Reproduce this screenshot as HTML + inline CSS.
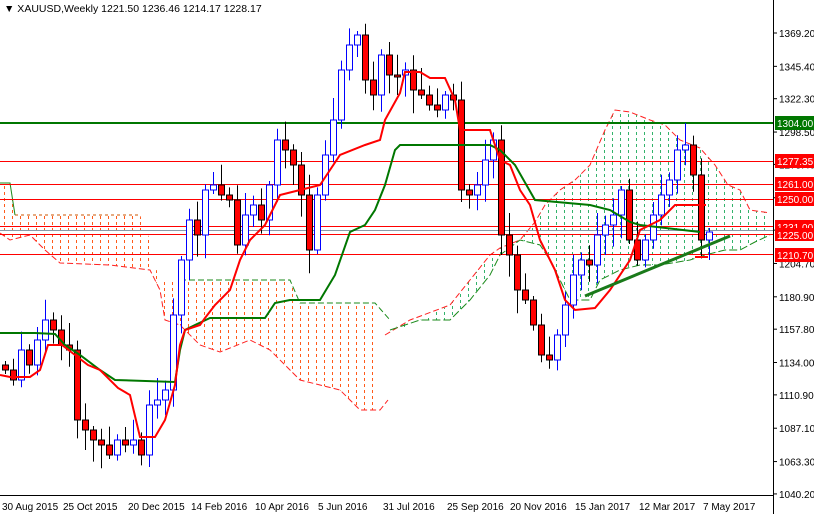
<!DOCTYPE html>
<html><head><meta charset="utf-8"><style>
html,body{margin:0;padding:0;background:#fff;}
svg{display:block;font-family:"Liberation Sans",sans-serif;}
</style></head><body>
<svg id="c" width="814" height="514" viewBox="0 0 814 514" xmlns="http://www.w3.org/2000/svg">
<defs>
<pattern id="po" width="8" height="6" patternUnits="userSpaceOnUse"><line x1="4.5" y1="0" x2="4.5" y2="3" stroke="#ff5a1a" stroke-width="1"/></pattern>
<pattern id="pg" width="8" height="6" patternUnits="userSpaceOnUse"><line x1="4.5" y1="0" x2="4.5" y2="3" stroke="#33b36b" stroke-width="1"/></pattern>
</defs>
<rect width="814" height="514" fill="#fff"/>
<polygon fill="url(#po)" points="0,183 10,183 15,215 140,215 150,240 155,265 160,280 175,280 180,280 290,280 300,303 380,303 380,410 360,410 350,400 340,390 300,380 290,370 270,350 250,340 220,352 200,345 180,325 165,320 160,290 150,270 110,265 60,263 45,250 30,235 10,240 0,233"/>
<polyline fill="none" stroke="#cc5500" stroke-width="1" stroke-dasharray="3,3" points="15,215 140,215"/>
<polyline fill="none" stroke="#1a8a1a" stroke-width="1" points="0,183 10,183 15,215"/>
<polyline fill="none" stroke="#1a8a1a" stroke-width="1" stroke-dasharray="6,3" points="180,280 290,280 300,303 375,303 390,320"/>
<polyline fill="none" stroke="#ff2020" stroke-width="1" stroke-dasharray="6,3" points="0,233 10,240 30,235 45,250 60,263 110,265 150,270 160,290 165,320 180,325 200,345 220,352 250,340 270,350 290,370 300,380 340,390 350,400 360,410 380,410 388,400"/>
<polygon fill="url(#pg)" points="390,330 400,325 420,320 450,305 470,280 490,255 500,248 520,240 535,222 545,205 560,190 575,180 590,165 605,130 615,110 630,112 650,120 665,125 680,140 700,148 715,165 728,185 740,190 750,210 770,213 770,240 755,242 740,250 725,250 705,255 690,260 660,265 640,265 620,270 600,280 590,300 570,300 550,260 540,245 520,240 500,255 490,275 470,300 450,320 420,320 400,330"/>
<polyline fill="none" stroke="#ff2020" stroke-width="1" stroke-dasharray="6,3" points="385,335 410,320 450,305 470,280 490,255 500,248 520,240 535,222 545,205 560,190 575,180 590,165 605,130 615,110 630,112 650,120 665,125 680,140 700,148 715,165 728,185 740,190 750,210 770,213"/>
<polyline fill="none" stroke="#1a8a1a" stroke-width="1" stroke-dasharray="8,3" points="390,330 420,320 450,320 470,300 490,275 500,255 520,240 540,245 550,260 570,300 590,300 600,280 620,270 640,265 660,265 690,260 705,255 725,250 740,250 755,242 770,235"/>
<line x1="0" y1="123" x2="773" y2="123" stroke="#007700" stroke-width="2"/>
<g stroke="#ff0000" stroke-width="1">
<line x1="0" y1="161.5" x2="773" y2="161.5"/><line x1="0" y1="184.5" x2="773" y2="184.5"/><line x1="0" y1="199.5" x2="773" y2="199.5"/><line x1="0" y1="226.5" x2="773" y2="226.5"/><line x1="0" y1="234.5" x2="773" y2="234.5"/><line x1="0" y1="254.5" x2="773" y2="254.5"/>
</g>
<line x1="0" y1="230.5" x2="773" y2="230.5" stroke="#8a9aa8" stroke-width="1"/>
<g id="cand"></g>
<polyline fill="none" stroke="#007700" stroke-width="2" points="0,333 35,333 55,334 65,345 80,355 100,370 115,380 175,382 180,350 185,330 195,325 210,318 265,318 275,303 290,300 320,300 335,275 350,232 365,225 375,210 385,185 395,150 400,145 490,145 500,150 515,165 535,200 590,205 610,210 630,222 640,225 700,232"/>
<polyline fill="none" stroke="#ff0000" stroke-width="2" points="0,375 10,377 30,377 40,370 48,345 62,345 75,355 88,365 100,370 118,388 130,395 140,437 155,437 165,420 175,385 180,345 185,330 200,325 205,318 215,305 230,290 240,260 250,240 265,225 280,195 300,190 320,185 330,170 340,155 365,145 380,140 385,120 400,93 405,72 420,72 430,78 445,78 455,100 460,130 490,130 500,160 510,165 520,190 530,205 540,240 555,270 565,300 575,310 595,308 610,290 630,260 640,230 660,220 675,205 690,205 700,205 706,205"/>
<line x1="695" y1="257" x2="708" y2="257" stroke="#ff0000" stroke-width="2"/>
<line x1="585" y1="296" x2="730" y2="236" stroke="#1a7a1a" stroke-width="3"/>
<line x1="773.5" y1="0" x2="773.5" y2="514" stroke="#000"/>
<line x1="0" y1="495.5" x2="773" y2="495.5" stroke="#000"/>
<g font-size="10" fill="#000" id="ylab"></g>
<g font-size="10" fill="#000">
<text x="2" y="510">30 Aug 2015</text><text x="63" y="510">25 Oct 2015</text><text x="128" y="510">20 Dec 2015</text><text x="191" y="510">14 Feb 2016</text><text x="255" y="510">10 Apr 2016</text><text x="318" y="510">5 Jun 2016</text><text x="383" y="510">31 Jul 2016</text><text x="447" y="510">25 Sep 2016</text><text x="510" y="510">20 Nov 2016</text><text x="575" y="510">15 Jan 2017</text><text x="639" y="510">12 Mar 2017</text><text x="703" y="510">7 May 2017</text>
</g>
<g font-size="10">
<rect x="775" y="116" width="39" height="14" fill="#007700"/><text x="777" y="127" fill="#fff">1304.00</text>
<rect x="775" y="154" width="39" height="14" fill="#ff0000"/><text x="777" y="165" fill="#fff">1277.35</text>
<rect x="775" y="177" width="39" height="14" fill="#ff0000"/><text x="777" y="188" fill="#fff">1261.00</text>
<rect x="775" y="192" width="39" height="14" fill="#ff0000"/><text x="777" y="203" fill="#fff">1250.00</text>
<rect x="775" y="220" width="39" height="14" fill="#ff0000"/><text x="777" y="231" fill="#fff">1231.00</text>
<rect x="775" y="228" width="39" height="13" fill="#ff0000"/><text x="777" y="239" fill="#fff">1225.00</text>
<rect x="775" y="248" width="39" height="14" fill="#ff0000"/><text x="777" y="259" fill="#fff">1210.70</text>
</g>
<text x="4" y="12" font-size="10.5" fill="#000">▼ XAUUSD,Weekly  1221.50 1236.46 1214.17 1228.17</text>
</svg>
<script>
var ys=[370,380,350,365,340,320,330,345,350,420,430,440,445,455,440,445,440,455,405,400,390,315,260,220,235,190,185,195,200,245,215,205,220,185,140,150,165,195,250,195,155,120,70,45,35,80,95,55,75,75,70,90,95,105,110,95,100,190,195,185,160,140,235,255,290,300,325,355,360,335,305,275,260,265,235,225,215,190,240,260,240,215,195,180,150,145,175,240,232];
var g=document.getElementById('cand'),s='';
var prev=365;
for(var i=0;i<ys.length;i++){
 var x=5+8*i,o=prev,c=ys[i];
 var r=((i*37)%11),r2=((i*53)%13);
 var hi=Math.min(o,c)-4-r*1.8, lo=Math.max(o,c)+4+r2*1.6;
 var up=c<o;
 s+='<line x1="'+(x+0.5)+'" y1="'+hi+'" x2="'+(x+0.5)+'" y2="'+lo+'" stroke="'+(up?'#0000ff':'#000')+'" stroke-width="1"/>';
 var t=Math.min(o,c),h=Math.max(Math.abs(o-c),2);
 if(up) s+='<rect x="'+(x-2.5)+'" y="'+t+'" width="6" height="'+h+'" fill="#fff" stroke="#0000ff"/>';
 else s+='<rect x="'+(x-2.5)+'" y="'+t+'" width="6" height="'+h+'" fill="#ff0000" stroke="#000"/>';
 prev=c;
}
g.innerHTML=s;
var L=[1369.20,1345.40,1322.30,1298.50,1275.40,1251.60,1228.50,1204.70,1180.90,1157.80,1134.00,1110.90,1087.10,1063.30,1040.20],t='';
for(var j=0;j<L.length;j++){var y=33+(1369.2-L[j])*1.401;t+='<line x1="773" y1="'+y+'" x2="777" y2="'+y+'" stroke="#000"/><text x="779" y="'+(y+4)+'">'+L[j].toFixed(2)+'</text>';}
document.getElementById('ylab').innerHTML=t;
</script>
</body></html>
